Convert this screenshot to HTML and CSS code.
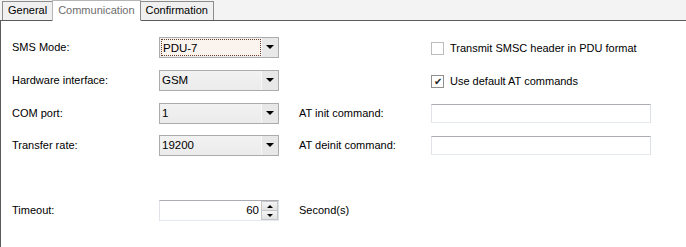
FILE: index.html
```html
<!DOCTYPE html>
<html lang="en">
  <head>
    <meta charset="UTF-8" />
    <title>Communication</title>
    <link rel="stylesheet" href="styles.css">
  </head>
  <body>
    <!-- 选项卡 -->
    <div class="tabs">
      <span class="tab">General</span>
      <span class="tab active">Communication</span>
      <span class="tab">Confirmation</span>
    </div>

    <div class="panel">
      <div class="form">
        <label class="lbl">SMS Mode:</label>
        <div class="combo focus"><span class="val">PDU-7</span><span class="arrow"></span></div>
        <span></span>
        <label class="check"><span class="box"></span>Transmit SMSC header in PDU format</label>

        <label class="lbl">Hardware interface:</label>
        <div class="combo"><span class="val">GSM</span><span class="arrow"></span></div>
        <span></span>
        <label class="check"><span class="box checked">&#10004;</span>Use default AT commands</label>

        <label class="lbl">COM port:</label>
        <div class="combo"><span class="val">1</span><span class="arrow"></span></div>
        <label class="lbl2">AT init command:</label>
        <div class="text"></div>

        <label class="lbl">Transfer rate:</label>
        <div class="combo"><span class="val">19200</span><span class="arrow"></span></div>
        <label class="lbl2">AT deinit command:</label>
        <div class="text"></div>

        <label class="lbl timeout">Timeout:</label>
        <div class="spin timeout">
          <span class="num">60</span>
          <span class="btns"><span class="up"></span><span class="down"></span></span>
        </div>
        <label class="lbl2 timeout">Second(s)</label>
      </div>
    </div>
  </body>
</html>
```

FILE: styles.css
```css
* {
  margin: 0;
  padding: 0;
  box-sizing: border-box;
}
body {
  width: 686px;
  height: 247px;
  overflow: hidden;
  background-color: #fff;
  font-family: "Liberation Sans", Arial, sans-serif;
  font-size: 11px;
  color: #000;
}

/* 选项卡 */
.tabs {
  display: flex;
  align-items: flex-end;
  height: 21px;
  padding-left: 2px;
  background-color: #f3f3f3;
  border-bottom: 1px solid #5b5b5b;
}
.tab {
  height: 19px;
  line-height: 17px;
  padding: 0 5px;
  border: 1px solid #8c8c8c;
  border-bottom: none;
  background-color: #f0f0f0;
  margin-right: -1px;
  font-size: 11px;
}
.tab.active {
  background-color: #fff;
  color: #6d6d6d;
  margin-bottom: -1px;
  height: 21px;
  border-color: #b5b5b5;
  line-height: 19px;
}

.panel {
  height: 226px;
  border-left: 1px solid #5b5b5b;
}

.form {
  display: grid;
  grid-template-columns: 147px 120px 152px 220px;
  grid-template-rows: 33px 33px 32px 33px;
  padding: 16px 0 0 11px;
  align-items: start;
}
.lbl, .lbl2 {
  line-height: 21px;
}
.lbl2 {
  padding-left: 20px;
}
.timeout {
  margin-top: 32px;
}

/* 下拉框 */
.combo {
  position: relative;
  display: flex;
  height: 21px;
  border: 1px solid #acacac;
  background: linear-gradient(#f2f2f2, #ebebeb);
}
.combo .val {
  flex: 1;
  line-height: 19px;
  padding-left: 2px;
  font-size: 11.5px;
}
.combo.focus .val {
  margin: 1px 0 1px 1px;
  line-height: 17px;
  padding-left: 1px;
  border: 1px dotted #6b3c2c;
  background-color: #fbf3ee;
}
.combo .arrow {
  width: 17px;
  position: relative;
  background-color: #e8e8e8;
  border-left: 1px solid #f8f8f8;
}
.combo .arrow::after {
  content: "";
  position: absolute;
  left: 4px;
  top: 7px;
  border-left: 4px solid transparent;
  border-right: 4px solid transparent;
  border-top: 4px solid #000;
}

.text {
  height: 19px;
  margin-top: 1px;
  border: 1px solid #abadb3;
  border-color: #abadb3 #dbdfe6 #e3e9ef #e2e3ea;
  background-color: #fff;
}

/* 复选框 */
.check {
  display: flex;
  align-items: center;
  height: 21px;
}
.box {
  width: 13px;
  height: 13px;
  margin-right: 6px;
  margin-top: 1px;
  border: 1px solid #8f8f8f;
  background-color: #fff;
  font-size: 10px;
  line-height: 11px;
  text-align: center;
  color: #222;
}
.box:not(.checked) {
  border-color: #bcbcbc;
}

/* 数字框 */
.spin {
  display: flex;
  height: 21px;
  border: 1px solid #abadb3;
  border-color: #abadb3 #dbdfe6 #e3e9ef #e2e3ea;
  background-color: #fff;
}
.spin .num {
  flex: 1;
  text-align: right;
  line-height: 19px;
  padding-right: 2px;
  font-size: 11.5px;
}
.spin .btns {
  width: 17px;
  display: flex;
  flex-direction: column;
}
.spin .up, .spin .down {
  flex: 1;
  position: relative;
  background: linear-gradient(#f4f4f4, #e2e2e2);
  border: 1px solid #c6c6c6;
}
.spin .down {
  border-top: none;
}
.spin .up::after, .spin .down::after {
  content: "";
  position: absolute;
  left: 5px;
  top: 3px;
  border-left: 3px solid transparent;
  border-right: 3px solid transparent;
}
.spin .up::after {
  border-bottom: 3px solid #000;
}
.spin .down::after {
  border-top: 3px solid #000;
}
```
